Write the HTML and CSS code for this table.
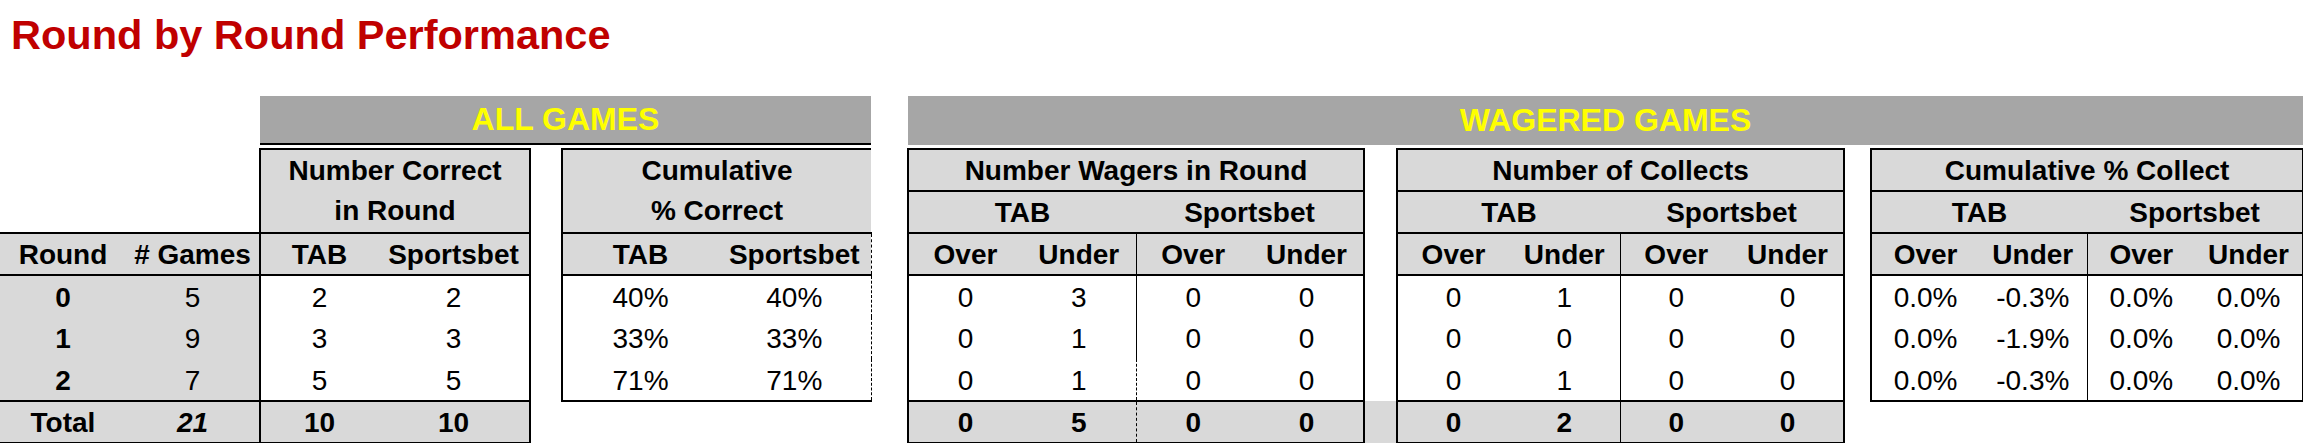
FILE: index.html
```html
<!DOCTYPE html>
<html lang="en">
<head>
<meta charset="utf-8">
<title>Round by Round Performance</title>
<link rel="stylesheet" href="styles.css">
</head>
<body>
<h1 class="title">Round by Round Performance</h1>
<div class="bands">
  <div class="band-spacer"></div>
  <div class="band band-all">ALL GAMES</div>
  <div class="band-gap"></div>
  <div class="band band-wag">WAGERED GAMES</div>
</div>
<table class="sheet">
  <colgroup>
    <col class="c-round"><col class="c-games"><col class="c-nctab"><col class="c-ncsb"><col class="c-gap1">
    <col class="c-cctab"><col class="c-ccsb"><col class="c-gap2">
    <col class="c-114"><col class="c-114"><col class="c-114"><col class="c-114"><col class="c-gap3">
    <col class="c-112"><col class="c-111"><col class="c-112"><col class="c-112"><col class="c-gap4">
    <col class="c-108"><col class="c-108"><col class="c-108"><col class="c-108">
  </colgroup>
  <tbody>
    <tr>
      <td colspan="2" rowspan="2"></td>
      <td colspan="2" rowspan="2" class="gy hd bt bl br two">Number Correct<br>in Round</td>
      <td rowspan="2"></td>
      <td colspan="2" rowspan="2" class="gy hd bt bl two">Cumulative<br>% Correct</td>
      <td rowspan="2"></td>
      <td colspan="4" class="gy hd bt bl br bb">Number Wagers in Round</td>
      <td></td>
      <td colspan="4" class="gy hd bt bl br bb">Number of Collects</td>
      <td></td>
      <td colspan="4" class="gy hd bt bl br bb">Cumulative % Collect</td>
    </tr>
    <tr>
      <td colspan="2" class="gy hd bl bb">TAB</td><td colspan="2" class="gy hd br bb">Sportsbet</td>
      <td></td>
      <td colspan="2" class="gy hd bl bb">TAB</td><td colspan="2" class="gy hd br bb">Sportsbet</td>
      <td></td>
      <td colspan="2" class="gy hd bl bb">TAB</td><td colspan="2" class="gy hd br bb">Sportsbet</td>
    </tr>
    <tr>
      <td class="gy hd bt bb">Round</td><td class="gy hd bt bb"># Games</td>
      <td class="gy hd bt bb bl">TAB</td><td class="gy hd bt bb br">Sportsbet</td>
      <td></td>
      <td class="gy hd bt bb bl">TAB</td><td class="gy hd bt bb dr">Sportsbet</td>
      <td></td>
      <td class="gy hd bb bl">Over</td><td class="gy hd bb">Under</td><td class="gy hd bb sl">Over</td><td class="gy hd bb br">Under</td>
      <td></td>
      <td class="gy hd bb bl">Over</td><td class="gy hd bb">Under</td><td class="gy hd bb sl">Over</td><td class="gy hd bb br">Under</td>
      <td></td>
      <td class="gy hd bb bl">Over</td><td class="gy hd bb">Under</td><td class="gy hd bb sl">Over</td><td class="gy hd bb br">Under</td>
    </tr>
    <tr>
      <td class="gy hd">0</td><td class="gy">5</td>
      <td class="bl">2</td><td class="br">2</td>
      <td></td>
      <td class="bl">40%</td><td class="dr">40%</td>
      <td></td>
      <td class="bl">0</td><td>3</td><td class="sl">0</td><td class="br">0</td>
      <td></td>
      <td class="bl">0</td><td>1</td><td class="sl">0</td><td class="br">0</td>
      <td></td>
      <td class="bl">0.0%</td><td>-0.3%</td><td class="sl">0.0%</td><td class="br">0.0%</td>
    </tr>
    <tr>
      <td class="gy hd">1</td><td class="gy">9</td>
      <td class="bl">3</td><td class="br">3</td>
      <td></td>
      <td class="bl">33%</td><td class="dr">33%</td>
      <td></td>
      <td class="bl">0</td><td>1</td><td class="sl">0</td><td class="br">0</td>
      <td></td>
      <td class="bl">0</td><td>0</td><td class="sl">0</td><td class="br">0</td>
      <td></td>
      <td class="bl">0.0%</td><td>-1.9%</td><td class="sl">0.0%</td><td class="br">0.0%</td>
    </tr>
    <tr>
      <td class="gy hd">2</td><td class="gy">7</td>
      <td class="bl">5</td><td class="br">5</td>
      <td></td>
      <td class="bl bb">71%</td><td class="dr bb">71%</td>
      <td></td>
      <td class="bl">0</td><td>1</td><td class="dl">0</td><td class="br">0</td>
      <td></td>
      <td class="bl">0</td><td>1</td><td class="sl">0</td><td class="br">0</td>
      <td></td>
      <td class="bl bb">0.0%</td><td class="bb">-0.3%</td><td class="sl bb">0.0%</td><td class="br bb">0.0%</td>
    </tr>
    <tr>
      <td class="gy hd bt bb">Total</td><td class="gy hd it bt bb">21</td>
      <td class="gy hd bt bb bl">10</td><td class="gy hd bt bb br">10</td>
      <td></td><td></td><td></td><td></td>
      <td class="gy hd bt bb bl">0</td><td class="gy hd bt bb">5</td><td class="gy hd bt bb dl">0</td><td class="gy hd bt bb br">0</td>
      <td class="gy"></td>
      <td class="gy hd bt bb bl">0</td><td class="gy hd bt bb">2</td><td class="gy hd bt bb sl">0</td><td class="gy hd bt bb br">0</td>
      <td></td>
      <td></td><td></td><td></td><td></td>
    </tr>
  </tbody>
</table>
</body>
</html>
```
FILE: styles.css
```css
html, body {
  margin: 0;
  padding: 0;
  overflow: hidden;
  background: #ffffff;
}

body {
  width: 2303px;
  font-family: "Liberation Sans", Arial, sans-serif;
  color: #000000;
}

.title {
  margin: 11px 0 0 11px;
  font-size: 41.5px;
  line-height: 48px;
  font-weight: 700;
  color: #C00000;
}

.bands {
  display: flex;
  margin-top: 37px;
  height: 49px;
}

.band-spacer { width: 260px; flex: none; }
.band-gap { width: 37px; flex: none; }

.band {
  flex: none;
  box-sizing: border-box;
  display: flex;
  align-items: center;
  justify-content: center;
  background: #A6A6A6;
  color: #FFFF00;
  font-size: 32px;
  font-weight: 700;
}

.band-all { width: 611px; border-bottom: 2px solid #000000; }
.band-wag { width: 1395px; }

.sheet {
  border-collapse: collapse;
  table-layout: fixed;
  width: 2303px;
  margin-top: 3px;
}

.c-round { width: 126px; }
.c-games { width: 134px; }
.c-nctab { width: 118px; }
.c-ncsb { width: 152px; }
.c-gap1 { width: 32px; }
.c-cctab { width: 156px; }
.c-ccsb { width: 153px; }
.c-gap2 { width: 37px; }
.c-114 { width: 114px; }
.c-gap3 { width: 33px; }
.c-112 { width: 112px; }
.c-111 { width: 111px; }
.c-gap4 { width: 27px; }
.c-108 { width: 108px; }

.sheet tr { height: 42px; }

.sheet td {
  padding: 2px 0 0;
  text-align: center;
  vertical-align: middle;
  font-size: 28px;
  line-height: 1;
  white-space: nowrap;
}

.sheet td.two { line-height: 40px; padding: 0; }

.gy { background: #D9D9D9; }
.hd { font-weight: 700; }
.it { font-style: italic; }

.bt { border-top: 2px solid #000000; }
.bb { border-bottom: 2px solid #000000; }
.bl { border-left: 2px solid #000000; }
.br { border-right: 2px solid #000000; }
.sl { border-left: 1px solid #000000; }
.dl { border-left: 1px dashed #000000; }
.dr { border-right: 1px dashed #000000; }
```
